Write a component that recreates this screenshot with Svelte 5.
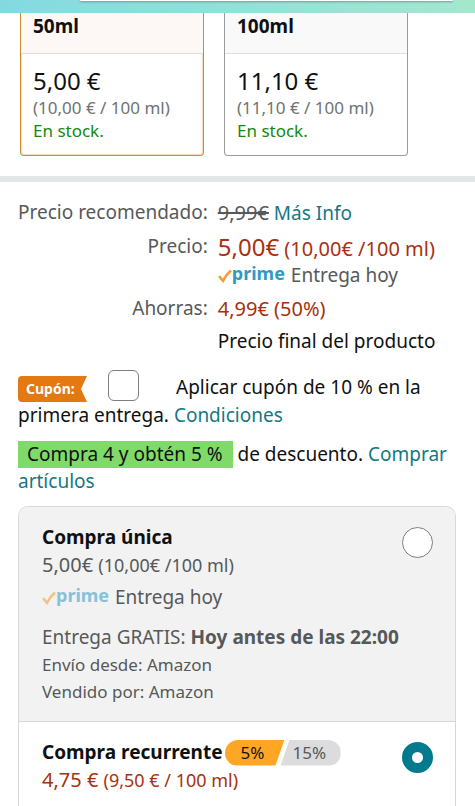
<script>
  /** @type {{ size: string, price: string, unit: string }[]} */
  const sizes = [
    { size: '50ml', price: '5,00 €', unit: '(10,00 € / 100 ml)' },
    { size: '100ml', price: '11,10 €', unit: '(11,10 € / 100 ml)' }
  ];

  let selectedSize = $state('50ml');
  let coupon = $state(false);
  let purchase = $state('recurring');
</script>

{#snippet primeLogo(faded)}
  <span class="prime" class:faded>
    <svg width="14" height="14" viewBox="0 0 14 14" fill="none" aria-hidden="true">
      <path d="M1 7.2L5 11.8C7 8 9.4 4.6 13 1.6" stroke="#f0a030" stroke-width="2.6" />
    </svg><span class="prime-word">prime</span>
  </span>
{/snippet}

<div class="page">
  <header class="topbar">
    <div class="search-edge"></div>
  </header>

  <section class="sizes">
    {#each sizes as item}
      <button
        class="size-card"
        class:selected={selectedSize === item.size}
        aria-pressed={selectedSize === item.size}
        onclick={() => (selectedSize = item.size)}
      >
        <span class="size-name">{item.size}</span>
        <span class="size-body">
          <span class="size-price">{item.price}</span>
          <span class="size-unit">{item.unit}</span>
          <span class="size-stock">En stock.</span>
        </span>
      </button>
    {/each}
  </section>

  <main class="content">
    <dl class="prices">
      <dt>Precio recomendado:</dt>
      <dd><s>9,99€</s> <a href="#info">Más Info</a></dd>
      <dt>Precio:</dt>
      <dd>
        <div class="price-line"><span class="price-big">5,00€</span> (10,00€ /100 ml)</div>
        <div class="muted">{@render primeLogo(false)} Entrega hoy</div>
      </dd>
      <dt>Ahorras:</dt>
      <dd class="savings">4,99€ (50%)</dd>
      <dd class="final">Precio final del producto</dd>
    </dl>

    <p class="coupon">
      <span class="coupon-badge">Cupón:</span><input type="checkbox" id="coupon" bind:checked={coupon} /><label for="coupon">Aplicar cupón de 10 % en la primera entrega.</label>
      <a href="#conditions">Condiciones</a>
    </p>

    <p class="promo">
      <span class="promo-badge">Compra 4 y obtén 5 %</span> de descuento. <a href="#items">Comprar artículos</a>
    </p>

    <div class="buybox">
      <div class="option" class:inactive={purchase !== 'once'}>
        <label class="option-text" for="once">
          <span class="option-title">Compra única</span>
          <span class="option-price">5,00€ <small>(10,00€ /100 ml)</small></span>
          <span class="option-delivery">{@render primeLogo(true)} Entrega hoy</span>
          <span>Entrega GRATIS: <b>Hoy antes de las 22:00</b></span>
          <small>Envío desde: Amazon</small>
          <small>Vendido por: Amazon</small>
        </label>
        <input type="radio" id="once" name="purchase" value="once" bind:group={purchase} />
      </div>

      <div class="option" class:inactive={purchase !== 'recurring'}>
        <label class="option-text" for="recurring">
          <span class="option-title">
            Compra recurrente
            <span class="pills"><span class="pill pill-on">5%</span><span class="pill pill-off">15%</span></span>
          </span>
          <span class="option-price red">4,75 € <small>(9,50 € / 100 ml)</small></span>
        </label>
        <input type="radio" id="recurring" name="purchase" value="recurring" bind:group={purchase} />
      </div>
    </div>
  </main>
</div>

<style>
  :global(body) {
    margin: 0;
    background: #fff;
  }

  .page {
    display: flex;
    flex-direction: column;
    min-height: 100vh;
    font-family: 'Noto Sans', sans-serif;
    font-size: 19px;
    line-height: 27px;
    color: #0f1111;
  }

  a {
    color: #147884;
    text-decoration: none;
  }

  small {
    font-size: 17px;
  }

  /* Header strip */
  .topbar {
    height: 13px;
    padding: 0 22px 0 80px;
    background: linear-gradient(90deg, #84d9e1, #a3e7cd);
  }

  .search-edge {
    height: 1px;
    background: #fff;
    border-radius: 0 0 6px 6px;
    box-shadow: 0 1px 2px #5f7f84;
  }

  /* Size cards */
  .sizes {
    display: flex;
    gap: 20px;
    padding: 0 20px 20px;
    border-bottom: 6px solid #e3e6e6;
  }

  .size-card {
    display: flex;
    flex-direction: column;
    flex: 0 1 184px;
    padding: 0;
    border: 1px solid #999c9c;
    border-top: 0;
    border-radius: 0 0 4px 4px;
    background: #fff;
    color: inherit;
    font: inherit;
    text-align: left;
    overflow: hidden;
  }

  .size-card.selected {
    border-color: #d18a2e;
    box-shadow: inset 0 0 0 1px #f3ddc0;
  }

  .size-name {
    padding: 0 12px 13px;
    border-bottom: 1px solid #dfdfdf;
    background: #f9f9f9;
    font-weight: 700;
  }

  .selected .size-name {
    background: #fdf8f6;
  }

  .size-body {
    display: flex;
    flex-direction: column;
    padding: 12px 12px 13px;
    line-height: 23px;
  }

  .size-price {
    font-size: 24px;
    line-height: 30px;
  }

  .size-unit {
    color: #6f7373;
    font-size: 17px;
  }

  .size-stock {
    color: #118a11;
    font-size: 17px;
  }

  /* Prices */
  .content {
    display: flex;
    flex-direction: column;
    flex: 1;
    padding: 17px 19px 0 18px;
  }

  .prices {
    display: grid;
    grid-template-columns: auto 1fr;
    gap: 6px 10px;
    margin: 0;
  }

  dt {
    color: #565959;
    text-align: right;
    white-space: nowrap;
  }

  dd {
    margin: 0;
  }

  s {
    color: #565959;
    font-size: 20px;
  }

  .price-line {
    color: #a8310f;
    font-size: 20px;
  }

  .price-big {
    font-size: 24px;
  }

  .savings {
    color: #a8310f;
    font-size: 20px;
  }

  .final {
    grid-column: 2;
  }

  .muted {
    color: #565959;
  }

  .prime {
    margin-right: 1px;
    color: #2f9ac4;
    font-size: 18px;
    font-weight: 700;
    line-height: 20px;
    vertical-align: 2px;
  }

  .prime svg {
    vertical-align: -3px;
  }

  .faded {
    opacity: 0.55;
  }

  /* Coupon and promotion */
  .coupon {
    margin: 19px 0 0;
  }

  .coupon-badge {
    display: inline-block;
    width: 52px;
    padding: 0 9px 0 8px;
    border-radius: 4px 0 0 4px;
    background: #e47911;
    clip-path: polygon(0 0, 100% 0, 63px 50%, 100% 100%, 0 100%);
    color: #fff;
    font-size: 14px;
    font-weight: 700;
    line-height: 26px;
  }

  input {
    appearance: none;
    flex: none;
    box-sizing: border-box;
    border: 1px solid #7d8080;
    background: #fff;
  }

  input[type='checkbox'] {
    width: 31px;
    height: 31px;
    margin: -8px 37px -8px 21px;
    border-radius: 6px;
    vertical-align: 1px;
  }

  input[type='checkbox']:checked {
    background: #007a8c;
  }

  .promo {
    margin: 12px 0 0;
  }

  .promo-badge {
    display: inline-block;
    padding: 0 10px 0 9px;
    background: #7fda69;
  }

  /* Buy box */
  .buybox {
    display: flex;
    flex-direction: column;
    flex: 1;
    margin-top: 11px;
    border: 1px solid #d5d9d9;
    border-bottom: 0;
    border-radius: 10px 10px 0 0;
    overflow: hidden;
  }

  .option {
    display: flex;
    justify-content: space-between;
    padding: 17px 22px 16px 23px;
  }

  .option + .option {
    flex: 1;
    padding-bottom: 0;
    border-top: 1px solid #d5d9d9;
  }

  .option.inactive {
    background: #f2f2f2;
    color: #565959;
  }

  .option-text {
    display: flex;
    flex-direction: column;
  }

  .option-title {
    display: flex;
    align-items: center;
    gap: 2px;
    color: #0f1111;
    font-weight: 700;
  }

  .option-price {
    font-size: 20px;
  }

  .option-price small {
    font-size: 18px;
  }

  .option-price.red {
    color: #a8310f;
  }

  .option-delivery {
    margin: 5px 0 13px;
  }

  .pills {
    display: flex;
    font-size: 17px;
    font-weight: 400;
    line-height: 26px;
  }

  .pill {
    box-sizing: border-box;
    width: 60px;
  }

  .pill-on {
    padding-left: 16px;
    border-radius: 13px 0 0 13px;
    background: #ffa724;
    clip-path: polygon(0 0, 100% 0, 51px 100%, 0 100%);
  }

  .pill-off {
    margin-left: -4px;
    padding-left: 12px;
    border-radius: 0 13px 13px 0;
    background: #dcdcdc;
    clip-path: polygon(9px 0, 100% 0, 100% 100%, 0 100%);
    color: #565959;
  }

  input[type='radio'] {
    width: 31px;
    height: 31px;
    margin: 3px 0 0;
    border-radius: 50%;
  }

  input[type='radio']:checked {
    border: 10px solid #007a8c;
  }
</style>
